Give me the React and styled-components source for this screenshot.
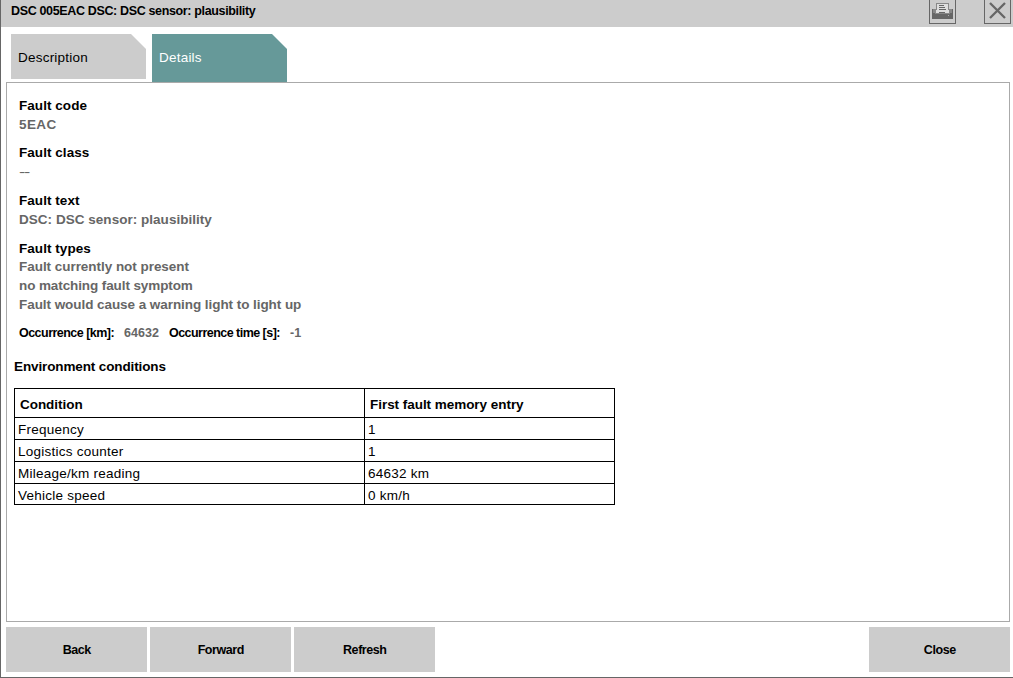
import styled, { createGlobalStyle } from "styled-components";

const GlobalStyle = createGlobalStyle`
  * {
    box-sizing: border-box;
  }

  body {
    margin: 0;
    background-color: #ffffff;
    font-family: "Liberation Sans", Arial, sans-serif;
    color: #000000;
  }
`;

const Window = styled.div`
  display: flex;
  flex-direction: column;
  width: 1013px;
  height: 678px;
  border-left: 1px solid #666666;
  border-bottom: 1px solid #666666;
  overflow: hidden;
`;

const TitleBar = styled.header`
  display: flex;
  justify-content: space-between;
  flex: none;
  height: 27px;
  padding: 0 2px 0 10px;
  background-color: #cccccc;
`;

const Title = styled.h1`
  margin: 0;
  font-size: 12.5px;
  line-height: 22px;
  letter-spacing: -0.35px;
  white-space: nowrap;
`;

const TitleActions = styled.div`
  display: flex;
  gap: 28px;
`;

const IconBtn = styled.button`
  display: block;
  width: 27px;
  height: 24px;
  padding: 0;
  border: 1px solid #666666;
  border-top: none;
  background-color: #cccccc;

  svg {
    display: block;
  }
`;

const Tabs = styled.nav`
  display: flex;
  gap: 6px;
  flex: none;
  height: 55px;
  padding: 7px 0 0 10px;
`;

const Tab = styled.button`
  width: 135px;
  height: ${({ $active }) => ($active ? 48 : 45)}px;
  padding: ${({ $active }) => ($active ? "0 7px 2px" : "2px 7px 0")};
  border: none;
  background-color: ${({ $active }) => ($active ? "#669999" : "#cccccc")};
  color: ${({ $active }) => ($active ? "#ffffff" : "#000000")};
  font: 13.5px "Liberation Sans", Arial, sans-serif;
  letter-spacing: 0.22px;
  text-align: left;
  clip-path: polygon(0 0, 120px 0, 100% 15px, 100% 100%, 0 100%);
`;

const Panel = styled.main`
  flex: none;
  width: 1004px;
  height: 540px;
  margin-left: 5px;
  padding: 13px 7px 0;
  border: 1px solid #aaaaaa;
`;

const Field = styled.section`
  height: ${({ $height }) => $height}px;
  padding-left: 5px;
`;

const Label = styled.h2`
  margin: 0 0 ${({ $tight }) => ($tight ? -1 : 0)}px;
  font-size: 13.5px;
  line-height: 19px;
  letter-spacing: ${({ $tracking }) => $tracking || 0.05}px;
`;

const Value = styled.p`
  margin: 0;
  color: #666666;
  font-size: 13.5px;
  font-weight: bold;
  line-height: 19px;
  letter-spacing: ${({ $tracking }) => $tracking || 0}px;
`;

const Dash = styled(Value)`
  width: 10px;
  font-weight: normal;
  letter-spacing: -1px;
  transform: scaleX(1.4);
  transform-origin: left;
`;

const Occurrence = styled.div`
  display: flex;
  height: 33px;
  padding-left: 5px;
  font-size: 12.5px;
  font-weight: bold;
  line-height: 18px;
  letter-spacing: -0.53px;
`;

const OccurrenceValue = styled.span`
  margin: 0 10px;
  color: #666666;
  letter-spacing: 0.03px;
`;

const Table = styled.table`
  width: 601px;
  margin-top: 12px;
  border-collapse: collapse;
  table-layout: fixed;
  font-size: 13.5px;

  th,
  td {
    border: 1px solid #000000;
    text-align: left;
  }

  th {
    height: 29px;
    padding: 2px 5px 0;
    letter-spacing: -0.04px;
  }

  th:first-child {
    width: 350px;
  }

  td {
    height: 22px;
    padding: 2px 3px 0;
    line-height: 18px;
    letter-spacing: 0.25px;
  }

  tr:last-child td {
    height: 21px;
    padding-top: 3px;
    line-height: 17px;
  }
`;

const Footer = styled.footer`
  display: flex;
  gap: 3px;
  padding: 5px 3px 0 5px;
`;

const FooterBtn = styled.button`
  width: 141px;
  height: 45px;
  margin-left: ${({ $right }) => ($right ? "auto" : 0)};
  padding: 0;
  border: none;
  background-color: #cccccc;
  color: #000000;
  font: bold 12.5px "Liberation Sans", Arial, sans-serif;
  letter-spacing: -0.45px;
  text-indent: 0.5px;
`;

const conditions = [
  ["Frequency", "1"],
  ["Logistics counter", "1"],
  ["Mileage/km reading", "64632 km"],
  ["Vehicle speed", "0 km/h"],
];

const PrinterIcon = () => (
  <svg width="25" height="23" viewBox="0 0 25 23" shapeRendering="crispEdges">
    <path fill="#666666" d="M2 9h21v10h-21z" />
    <path fill="#888888" d="M3 9h3v4h-3zM19 9h3v4h-3z" />
    <path fill="#888888" d="M6 3h13v7h1v4h-15v-4h1z" />
    <path fill="#dddddd" d="M7 4h11v6h1v3h-13v-3h1z" />
    <path
      fill="#666666"
      d="M9 5h5v1h-5zM9 7h6v1h-6zM9 9h7v1h-7zM9 12h6v1h-6z"
    />
    <path fill="#aaaaaa" d="M18 15h1v1h-1z" />
  </svg>
);

const CloseIcon = () => (
  <svg width="25" height="23" viewBox="0 0 25 23">
    <path
      d="M5 3L20 18M20 3L5 18"
      fill="none"
      stroke="#666666"
      strokeWidth="2.3"
    />
  </svg>
);

const App = () => {
  return (
    <>
      <GlobalStyle />
      <Window>
        <TitleBar>
          <Title>DSC 005EAC DSC: DSC sensor: plausibility</Title>
          <TitleActions>
            <IconBtn aria-label="Print">
              <PrinterIcon />
            </IconBtn>
            <IconBtn aria-label="Close window">
              <CloseIcon />
            </IconBtn>
          </TitleActions>
        </TitleBar>
        <Tabs>
          <Tab>Description</Tab>
          <Tab $active>Details</Tab>
        </Tabs>
        <Panel>
          <Field $height={47}>
            <Label>Fault code</Label>
            <Value $tracking={0.4}>5EAC</Value>
          </Field>
          <Field $height={48}>
            <Label>Fault class</Label>
            <Dash>--</Dash>
          </Field>
          <Field $height={48}>
            <Label>Fault text</Label>
            <Value $tracking={0.03}>DSC: DSC sensor: plausibility</Value>
          </Field>
          <Field $height={85}>
            <Label $tight>Fault types</Label>
            <Value $tracking={-0.04}>Fault currently not present</Value>
            <Value $tracking={-0.1}>no matching fault symptom</Value>
            <Value $tracking={-0.06}>
              Fault would cause a warning light to light up
            </Value>
          </Field>
          <Occurrence>
            Occurrence [km]:
            <OccurrenceValue>64632</OccurrenceValue>
            Occurrence time [s]:
            <OccurrenceValue>-1</OccurrenceValue>
          </Occurrence>
          <Label $tracking={-0.12}>Environment conditions</Label>
          <Table>
            <thead>
              <tr>
                <th>Condition</th>
                <th>First fault memory entry</th>
              </tr>
            </thead>
            <tbody>
              {conditions.map(([name, value]) => (
                <tr key={name}>
                  <td>{name}</td>
                  <td>{value}</td>
                </tr>
              ))}
            </tbody>
          </Table>
        </Panel>
        <Footer>
          <FooterBtn>Back</FooterBtn>
          <FooterBtn>Forward</FooterBtn>
          <FooterBtn>Refresh</FooterBtn>
          <FooterBtn $right>Close</FooterBtn>
        </Footer>
      </Window>
    </>
  );
};

export default App;
